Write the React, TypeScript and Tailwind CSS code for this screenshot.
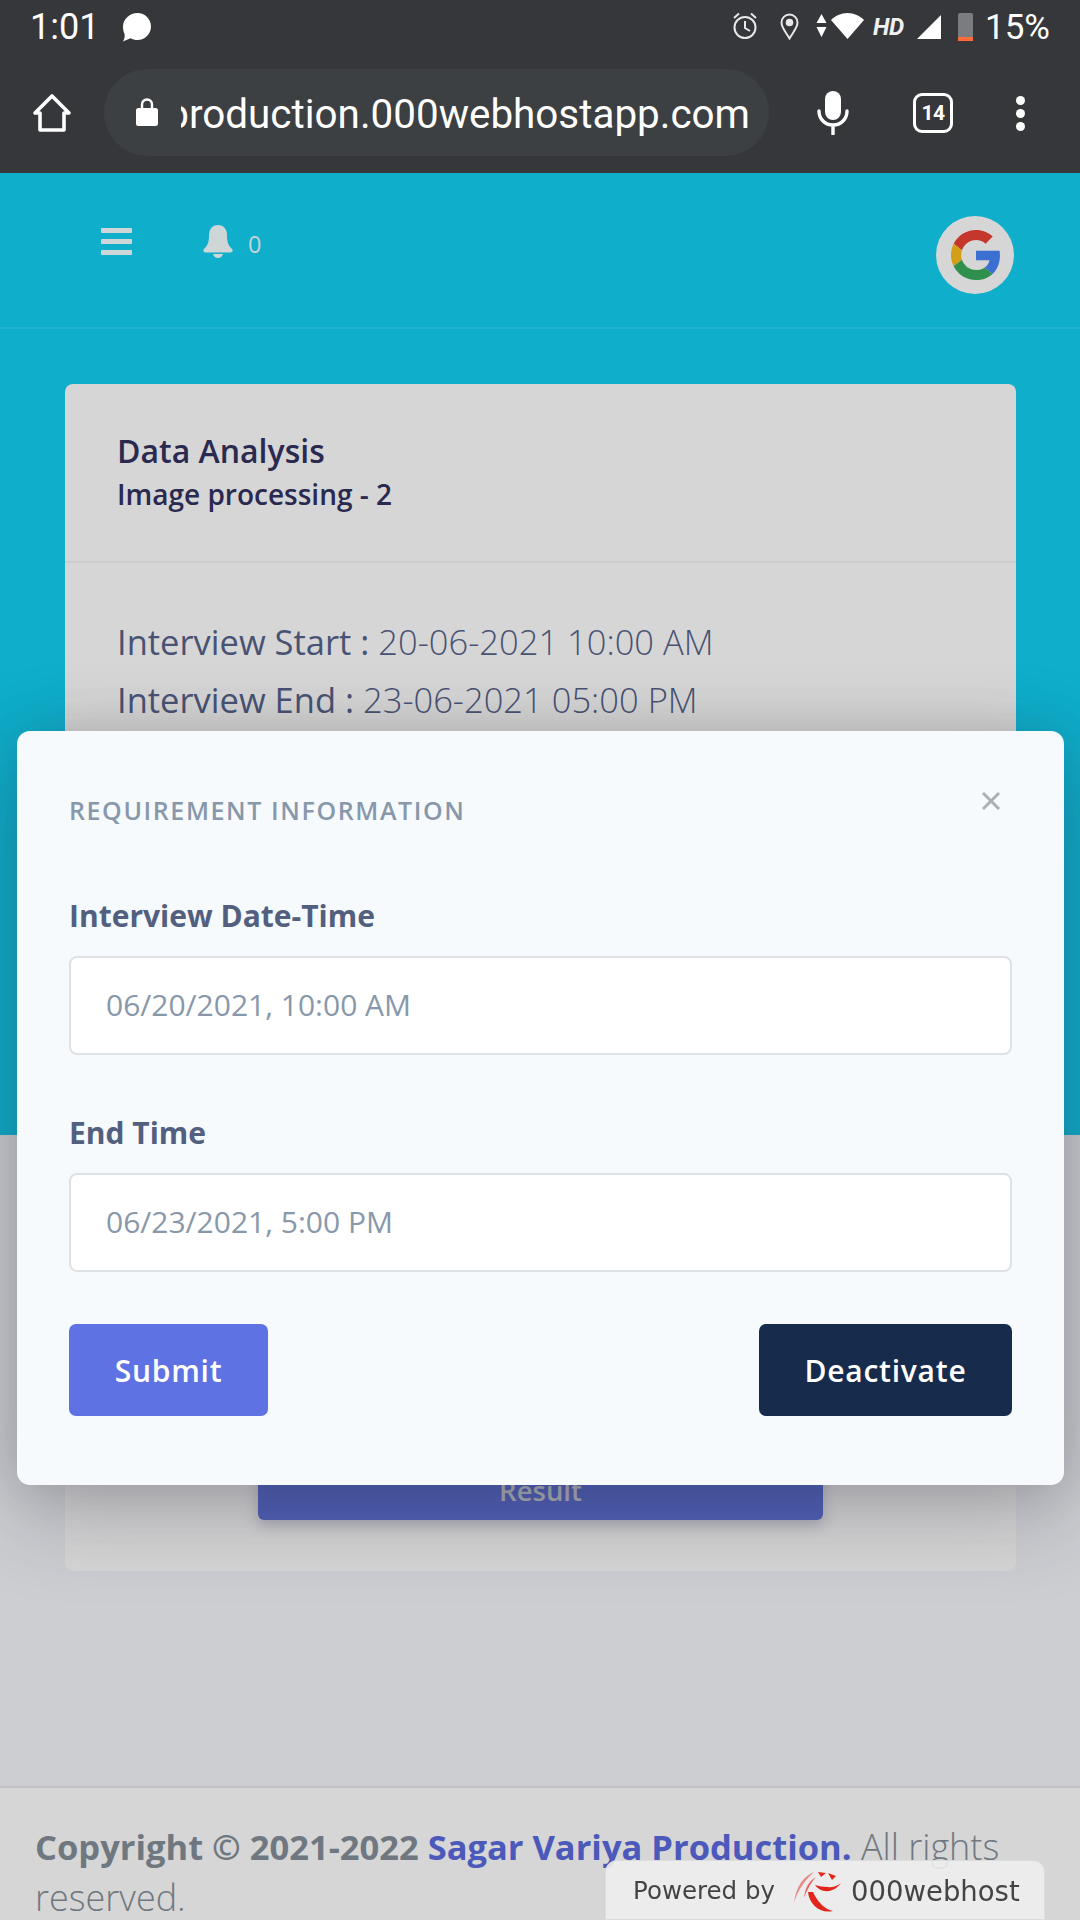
import React from "react";

const Sans = "font-['Open_Sans',sans-serif]";

function StatusBar() {
  return (
    <div className="h-[54px] flex items-center justify-between pl-[30px] pr-[30px] font-['Roboto',sans-serif] text-white">
      <div className="flex items-center gap-[23px]">
        <span className="text-[36px] leading-none">1:01</span>
        <svg width="30" height="30" viewBox="0 0 30 30" fill="#fff" className="-mt-[1px]">
          <path d="M15.500 1C23 1 29 7 29 14.500S23 28 15.500 28c-2.500 0-5-.6-7-1.800L1 29.500c1.200-2 1.800-4.500 1.700-7C1.500 20 1 17.500 1 14.500 1 7 8 1 15.500 1z" />
        </svg>
      </div>
      <div className="flex items-center">
        <svg width="26" height="28" viewBox="0 0 26 28" fill="none" stroke="#e8e8e8" strokeWidth="2" className="mr-[22px] -mt-[2px]">
          <circle cx="13" cy="15.500" r="10.500" />
          <path d="M13 9v7l5 3M2 6l5-4.500M24 6l-5-4.500" />
        </svg>
        <svg width="19" height="27" viewBox="0 0 19 27" fill="none" stroke="#e8e8e8" strokeWidth="2" className="mr-[17px] -mt-[2px]">
          <path d="M9.500 25.500C5 18 1.500 14.500 1.500 9.500a8 8 0 0 1 16 0c0 5-3.500 8.500-8 16z" />
          <circle cx="9.500" cy="9.500" r="2.800" fill="#e8e8e8" />
        </svg>
        <svg width="11" height="23" viewBox="0 0 11 23" fill="#fff" className="mr-[4px] -mt-[4px]">
          <path d="M5.500 0l5 9H.5zM5.500 23l-5-10h10z" />
        </svg>
        <svg width="33" height="26" viewBox="0 0 33 26" fill="#fff" className="mr-[9px] -mt-[3px]">
          <path d="M16.500 26L0 7C4 3 10 0 16.500 0S29 3 33 7z" />
        </svg>
        <span className="w-[31px] text-[24px] leading-none font-bold italic mr-[13px] tracking-[-0.5px] text-[#f0f0f0] whitespace-nowrap">HD</span>
        <svg width="24" height="24" viewBox="0 0 24 24" fill="#fff" className="mr-[17px]">
          <path d="M24 0v24H0z" />
        </svg>
        <div className="w-[15px] h-[28px] mr-[12px] -mt-[1px] flex flex-col rounded-t-[2px] bg-[#7b7c7f]">
          <div className="flex-1" />
          <div className="h-[4px] bg-[#ff6b3a]" />
        </div>
        <span className="text-[35px] leading-none">15%</span>
      </div>
    </div>
  );
}

function BrowserBar() {
  return (
    <div className="h-[119px] flex items-start pl-[104px] pt-[15px] relative font-['Roboto',sans-serif] text-white">
      <svg width="40" height="40" viewBox="0 0 40 40" fill="none" stroke="#fff" strokeWidth="3.600" className="absolute left-[32px] top-[39px]" strokeLinejoin="round">
        <path d="M20 3L3 20h5v17h24V20h5z" />
      </svg>
      <div className="w-[665px] h-[87px] rounded-full bg-[#3c4043] flex items-center pl-[32px] overflow-hidden">
        <svg width="22" height="28" viewBox="0 0 22 28" fill="#fff" className="shrink-0 -mt-[1px]">
          <path d="M2.500 10h17a2.500 2.500 0 0 1 2.500 2.500V25.500a2.500 2.500 0 0 1-2.500 2.500h-17A2.500 2.500 0 0 1 0 25.500V12.500A2.500 2.500 0 0 1 2.500 10z" />
          <path d="M6 11V6.500a5 5 0 0 1 10 0V11" fill="none" stroke="#fff" strokeWidth="2.400" />
        </svg>
        <div className="ml-[23px] w-[569px] overflow-hidden whitespace-nowrap text-[40.400px] leading-[87px] pt-[3px] flex justify-end shrink-0">
          <span>sagarvariyaproduction.000webhostapp.com</span>
        </div>
      </div>
      <svg width="32" height="44" viewBox="0 0 32 44" fill="none" className="absolute left-[817px] top-[37px]">
        <rect x="8" y="0" width="16" height="29" rx="8" fill="#fff" />
        <path d="M2 20c0 8 6 14 14 14s14-6 14-14M16 34v9" stroke="#fff" strokeWidth="3.400" strokeLinecap="round" />
      </svg>
      <div className="absolute left-[913px] top-[39px] w-[40px] h-[40px] rounded-[9px] border-[3.500px] border-white flex items-center justify-center text-[21px] font-bold leading-none tracking-[-0.5px]">
        14
      </div>
      <div className="absolute left-[1016px] top-[42px] flex flex-col gap-[4px]">
        <div className="w-[9px] h-[9px] rounded-full bg-white" />
        <div className="w-[9px] h-[9px] rounded-full bg-white" />
        <div className="w-[9px] h-[9px] rounded-full bg-white" />
      </div>
    </div>
  );
}

function GoogleG() {
  return (
    <div className="w-[78px] h-[78px] rounded-full bg-[#d6d6d6] flex items-center justify-center">
      <svg width="50" height="50" viewBox="0 0 48 48" className="ml-[1px]">
        <path fill="#c5362c" d="M24 9.500c3.540 0 6.710 1.220 9.210 3.600l6.850-6.850C35.900 2.380 30.470 0 24 0 14.620 0 6.510 5.380 2.560 13.220l7.980 6.190C12.430 13.720 17.740 9.500 24 9.500z" />
        <path fill="#3b6fd1" d="M46.980 24.550c0-1.570-.15-3.090-.38-4.550H24v9.020h12.940c-.58 2.960-2.260 5.480-4.780 7.180l7.730 6c4.510-4.180 7.090-10.360 7.090-17.650z" />
        <path fill="#d2a016" d="M10.530 28.590c-.48-1.450-.76-2.990-.76-4.590s.27-3.140.76-4.590l-7.980-6.190C.92 16.460 0 20.120 0 24c0 3.880.92 7.540 2.560 10.780l7.970-6.190z" />
        <path fill="#2f8f4c" d="M24 48c6.480 0 11.930-2.130 15.890-5.810l-7.730-6c-2.150 1.450-4.920 2.300-8.160 2.300-6.260 0-11.570-4.220-13.470-9.910l-7.980 6.190C6.510 42.620 14.620 48 24 48z" />
      </svg>
    </div>
  );
}

function TopNav() {
  return (
    <div className="h-[156px] border-b-2 border-[#1eb3cf] flex items-start justify-between pl-[101px] pr-[66px]">
      <div className="flex items-start mt-[55px]">
        <div className="flex flex-col gap-[6px] w-[31px]">
          <div className="h-[5px] rounded-[1px] bg-[#ced6d8]" />
          <div className="h-[5px] rounded-[1px] bg-[#ced6d8]" />
          <div className="h-[5px] rounded-[1px] bg-[#ced6d8]" />
        </div>
        <svg width="30" height="33" viewBox="0 0 30 33" fill="#ced6d8" className="ml-[71px] -mt-[3px]">
          <path d="M15 0c6 0 9 4 9 11 0 7 2 10 5 13 1.500 1.500.5 3.500-2 3.500H3c-2.500 0-3.500-2-2-3.500 3-3 5-6 5-13C6 4 9 0 15 0z" />
          <path d="M10 29h10c-1 3-3 4-5 4s-4-1-5-4z" />
        </svg>
        <span className={`${Sans} ml-[15px] text-[23.500px] leading-[32px] text-[#c5d4d8]`}>0</span>
      </div>
      <div className="mt-[43px]">
        <GoogleG />
      </div>
    </div>
  );
}

function Card() {
  return (
    <div className="ml-[65px] mr-[64px] mt-[55px] h-[1187px] rounded-[8px] bg-[#d6d6d6] flex flex-col">
      <div className="h-[179px] border-b-2 border-[#cdcdcd] pl-[52px] pt-[44px]">
        <div className={`${Sans} text-[32px] leading-[45px] font-semibold text-[#2a2950]`}>Data Analysis</div>
        <div className={`${Sans} text-[28px] leading-[42px] font-semibold text-[#2a2950]`}>Image processing - 2</div>
      </div>
      <div className="flex-1 pl-[52px] pt-[50px] flex flex-col">
        <div className={`${Sans} text-[34.500px] leading-[58px] text-[#485273]`}>
          Interview Start : <span className="font-light">20-06-2021 10:00 AM</span>
        </div>
        <div className={`${Sans} text-[34.500px] leading-[58px] text-[#485273]`}>
          Interview End : <span className="font-light">23-06-2021 05:00 PM</span>
        </div>
        <div className="flex-1" />
        <div className={`${Sans} w-[565px] h-[80px] ml-[141px] mb-[51px] pt-[22px] rounded-[6px] bg-[#5060b8] shadow-[0_6px_14px_rgba(50,50,93,0.25)] flex items-center justify-center text-[27.500px] font-semibold text-[#b0b2ba]`}>
          Result
        </div>
      </div>
    </div>
  );
}

function Footer() {
  return (
    <div className="h-[134px] border-t-2 border-[#c2c3c8] bg-[#d6d6d6] pl-[35px] pr-[60px] pt-[33px]">
      <p className={`${Sans} text-[36px] leading-[51px] font-light text-[#6f7880]`}>
        <span className="text-[34.500px] font-bold">Copyright © 2021-2022 </span>
        <span className="text-[34.500px] font-bold text-[#4b59bb]">Sagar Variya Production.</span> All rights reserved.
      </p>
    </div>
  );
}

function Field({ label, value, className }: { label: string; value: string; className?: string }) {
  return (
    <div className={className}>
      <div className={`${Sans} text-[30px] leading-[44px] font-bold text-[#525f7f]`}>{label}</div>
      <div className={`${Sans} mt-[18px] h-[99px] rounded-[8px] border-2 border-[#dee2e6] bg-white pl-[35px] pb-[2px] flex items-center text-[30px] text-[#8898aa]`}>
        {value}
      </div>
    </div>
  );
}

function Modal() {
  return (
    <div className="absolute left-[17px] top-[731px] w-[1047px] h-[754px] rounded-[13px] bg-[#f6fafd] shadow-[0_25px_90px_rgba(40,40,60,0.3),0_0_50px_rgba(0,0,0,0.1)] px-[52px] pt-[61px]">
      <div className="flex items-start justify-between">
        <div className={`${Sans} text-[25px] leading-[36px] font-semibold tracking-[1.600px] text-[#8898aa]`}>REQUIREMENT INFORMATION</div>
        <svg width="20" height="20" viewBox="0 0 20 20" stroke="#a9b0b6" strokeWidth="3" className="mr-[11px] -mt-[1px]">
          <path d="M2 2l16 16M18 2L2 18" />
        </svg>
      </div>
      <Field label="Interview Date-Time" value="06/20/2021, 10:00 AM" className="mt-[66px]" />
      <Field label="End Time" value="06/23/2021, 5:00 PM" className="mt-[56px]" />
      <div className="flex justify-between mt-[52px]">
        <div className={`${Sans} w-[199px] h-[92px] rounded-[7px] bg-[#5e72e4] flex items-center justify-center text-[30px] font-semibold tracking-[0.750px] text-white`}>
          Submit
        </div>
        <div className={`${Sans} w-[253px] h-[92px] rounded-[7px] bg-[#172b4d] flex items-center justify-center text-[30px] font-semibold tracking-[0.750px] text-white`}>
          Deactivate
        </div>
      </div>
    </div>
  );
}

function Badge() {
  return (
    <div className="absolute left-[605px] top-[1860px] w-[440px] h-[60px] rounded-t-[12px] bg-[#eeeeee]/90 border border-[#dcdcdc] flex items-center pl-[27px] pt-[3px] font-['DejaVu_Sans',sans-serif] text-[#444444] [filter:blur(0.4px)]">
      <span className="w-[142px] text-[24.500px] leading-none whitespace-nowrap">Powered by</span>
      <svg width="50" height="44" viewBox="0 0 50 44" fill="none" className="ml-[17px] shrink-0">
        <path d="M22 2C12 6 4 16 2 33c3-11 9-21 20-31z" fill="#e88a84" />
        <path d="M24 7c-7 4-11 11-12 21 3-8 6-14 12-21z" fill="#e8605a" />
        <path d="M16 22c1 12 12 22 25 19-4-1-13-4-20-19z" fill="#e1251b" />
        <path d="M23 15c5 7 17 10 26-2-3 2-7 5-13 4-5 0-9-1-13-2z" fill="#e1251b" />
        <path d="M26 2l8 1-5 4zM36 3l8 3-4 4z" fill="#e1251b" />
      </svg>
      <span className="text-[27.500px] leading-none ml-[9px] whitespace-nowrap">000webhost</span>
    </div>
  );
}

export default function App() {
  return (
    <div className="relative w-[1080px] h-[1920px] overflow-hidden flex flex-col">
      <div className="h-[173px] bg-[#36373b] shrink-0">
        <StatusBar />
        <BrowserBar />
      </div>
      <div className="flex-1 bg-[linear-gradient(#0faecb_962px,#cdced2_962px)] flex flex-col">
        <TopNav />
        <Card />
      </div>
      <Footer />
      <Modal />
      <Badge />
    </div>
  );
}
